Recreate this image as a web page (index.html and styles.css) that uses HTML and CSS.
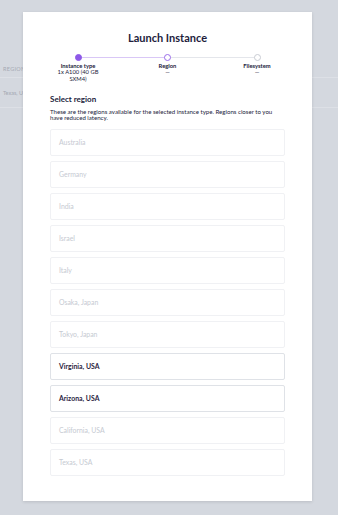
FILE: index.html
```html
<!DOCTYPE html>
<html lang="en">
<head>
  <meta charset="UTF-8">
  <meta name="viewport" content="width=device-width, initial-scale=1.0">
  <title>Launch Instance</title>
  <link rel="stylesheet" href="styles.css">
</head>
<body>

  <div class="page">
    <div class="table-row table-head">REGION</div>
    <div class="table-row">Texas, USA</div>
  </div>

  <div class="modal">
    <h1 class="modal-title">Launch Instance</h1>

    <div class="stepper">
      <div class="step done">
        <span class="dot"></span>
        <div class="step-name">Instance type</div>
        <div class="step-value">1x A100 (40 GB SXM4)</div>
      </div>
      <div class="step current">
        <span class="dot"></span>
        <div class="step-name">Region</div>
        <div class="step-value">—</div>
      </div>
      <div class="step">
        <span class="dot"></span>
        <div class="step-name">Filesystem</div>
        <div class="step-value">—</div>
      </div>
    </div>

    <h2 class="section-title">Select region</h2>
    <p class="section-text">These are the regions available for the selected instance type. Regions closer to you have reduced latency.</p>

    <div class="region-list">
      <button class="region" disabled>Australia</button>
      <button class="region" disabled>Germany</button>
      <button class="region" disabled>India</button>
      <button class="region" disabled>Israel</button>
      <button class="region" disabled>Italy</button>
      <button class="region" disabled>Osaka, Japan</button>
      <button class="region" disabled>Tokyo, Japan</button>
      <button class="region">Virginia, USA</button>
      <button class="region">Arizona, USA</button>
      <button class="region" disabled>California, USA</button>
      <button class="region" disabled>Texas, USA</button>
    </div>
  </div>

</body>
</html>
```

FILE: styles.css
```css
body {
  margin: 0;
  font-family: 'Lato', 'Liberation Sans', sans-serif;
  background: #d4d8df;
  color: #221c3b;
}
.page {
  padding-top: 60px;
}
.table-row {
  height: 15px;
  padding: 0 3px;
  display: flex;
  align-items: center;
  font-size: 5.5px;
  color: #a4a9b3;
  border-bottom: 1px solid #dde0e6;
}
.table-head {
  height: 17px;
  letter-spacing: 0.3px;
}
.table-row + .table-row {
  height: 29px;
}
.modal {
  position: absolute;
  top: 12px;
  left: 23px;
  width: 289px;
  height: 489px;
  box-sizing: border-box;
  padding: 19px 27px 0;
  background: #fff;
  box-shadow: 0 1px 3px rgba(0, 0, 0, 0.12);
}
.modal-title {
  margin: 0;
  text-align: center;
  font-size: 11px;
  line-height: 14px;
  font-weight: 700;
}
.stepper {
  position: relative;
  display: grid;
  grid-template-columns: repeat(3, 62px);
  column-gap: 27.5px;
  justify-content: center;
  margin-top: 8.5px;
}
.stepper::before,
.stepper::after {
  content: "";
  position: absolute;
  top: 3px;
  height: 1.5px;
}
.stepper::before {
  left: 28px;
  right: 28px;
  background: #e4e6eb;
}
.stepper::after {
  left: 28px;
  width: 90px;
  background: #d9c7f6;
}
.step {
  display: flex;
  flex-direction: column;
  align-items: center;
  text-align: center;
  position: relative;
  z-index: 1;
}
.dot {
  width: 7px;
  height: 7px;
  box-sizing: border-box;
  border-radius: 50%;
  border: 1px solid #c9ccd3;
  background: #fff;
}
.step.done .dot {
  background: #8e59e8;
  border-color: #8e59e8;
}
.step.current .dot {
  border-color: #9a6cea;
}
.step-name {
  margin-top: 2px;
  font-size: 5.8px;
  line-height: 6.5px;
  font-weight: 700;
}
.step-value {
  width: 48px;
  font-size: 5.8px;
  line-height: 6.5px;
}
.section-title {
  margin: 12px 0 0;
  font-size: 8px;
  line-height: 10px;
  font-weight: 700;
}
.section-text {
  margin: 4.5px 0 0;
  font-size: 6.1px;
  line-height: 6.5px;
}
.region-list {
  display: flex;
  flex-direction: column;
  gap: 5px;
  margin-top: 7px;
}
.region {
  height: 27px;
  padding: 0 8px;
  text-align: left;
  font-family: inherit;
  font-size: 6.9px;
  font-weight: 700;
  color: #2a2340;
  background: #fff;
  border: 1px solid #dfe2e7;
  border-radius: 2px;
}
.region:disabled {
  font-weight: 400;
  color: #c6cad2;
  border-color: #f0f1f4;
}
```
